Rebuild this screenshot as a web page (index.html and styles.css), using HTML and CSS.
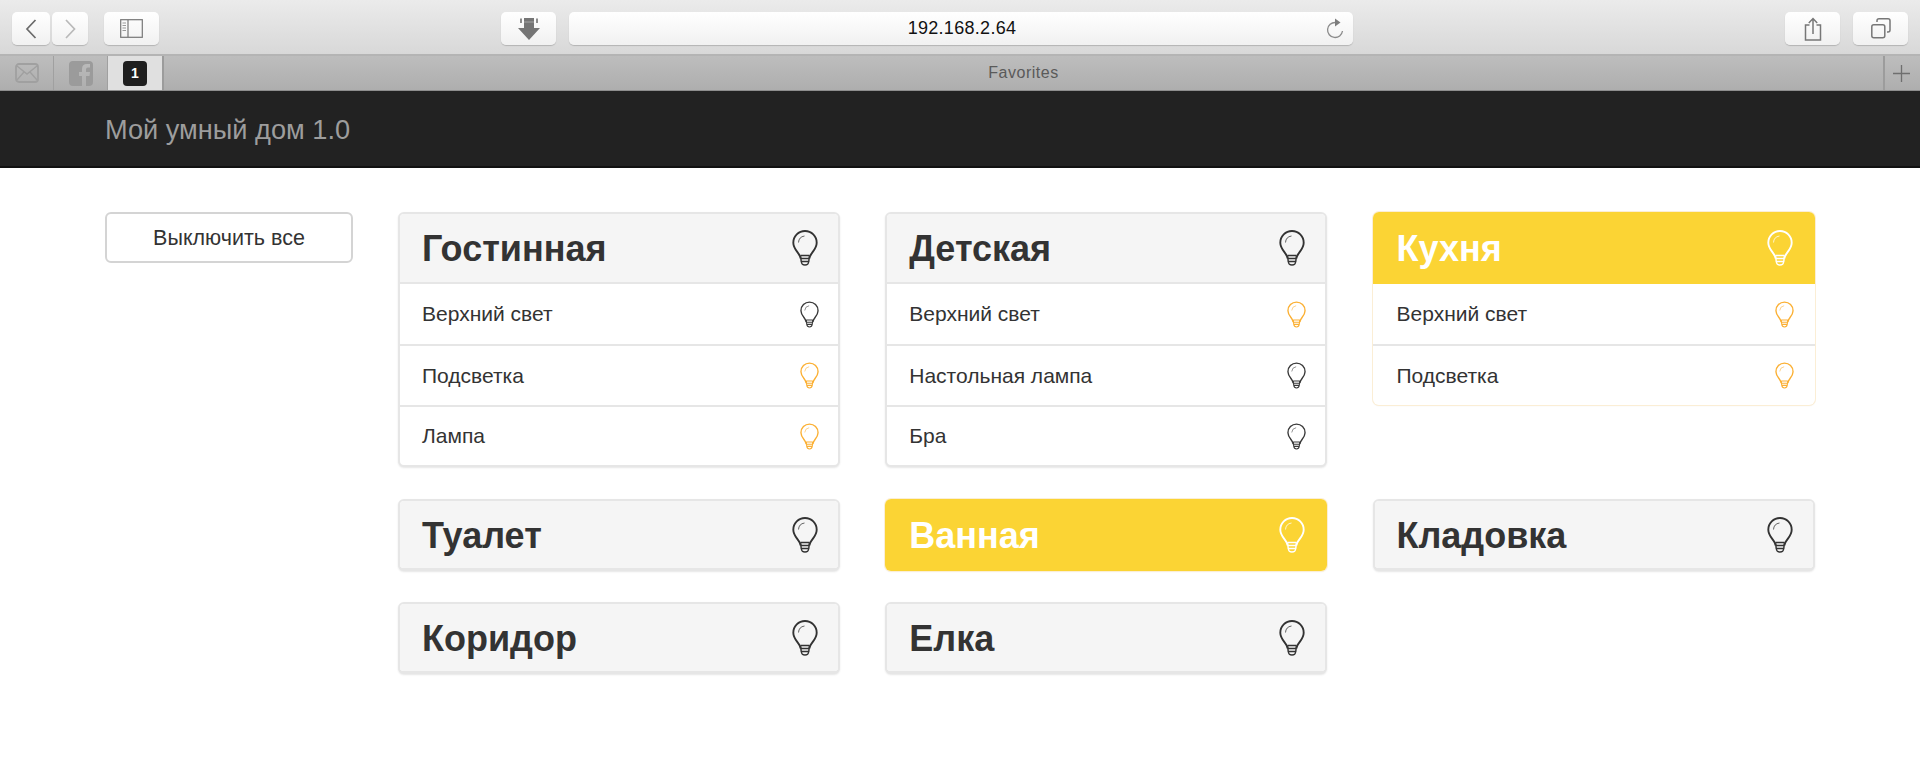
FILE: index.html
```html
<!DOCTYPE html>
<html lang="ru">
<head>
<meta charset="utf-8">
<title>Мой умный дом 1.0</title>
<link rel="stylesheet" href="styles.css">
</head>
<body>
<svg class="defs" width="0" height="0" aria-hidden="true">
  <symbol id="bulb" viewBox="0 0 26 36">
    <path d="M8.5 28.5C8.5 23.5 1.3 20 1.3 12.7A11.7 11.7 0 0 1 24.7 12.7C24.7 20 17.5 23.5 17.5 28.5" fill="none" stroke="currentColor" stroke-width="1.9"/>
    <path d="M8.5 25.5H17.5M8.7 28.5H17.3M9 31.5H17M9.3 31.5C9.6 34.4 10.5 35 13 35S16.4 34.4 16.7 31.5M8.5 25.5L9.3 32M17.5 25.5L16.7 32" fill="none" stroke="currentColor" stroke-width="1.5"/>
    <path d="M6.5 12.5A7 7 0 0 1 12.5 6" fill="none" stroke="currentColor" stroke-width="1" opacity=".75"/>
  </symbol>
</svg>

<div class="toolbar">
  <button class="tb back"><svg width="14" height="22" viewBox="0 0 14 22"><path d="M11.5 2L3 11L11.5 20" fill="none" stroke="#6a6a6a" stroke-width="1.7"/></svg></button>
  <button class="tb forward"><svg width="14" height="22" viewBox="0 0 14 22"><path d="M3 2L11.5 11L3 20" fill="none" stroke="#b9b9b9" stroke-width="1.7"/></svg></button>
  <button class="tb sidebar"><svg width="23" height="19" viewBox="0 0 23 19"><rect x=".7" y=".7" width="21.6" height="17.6" fill="none" stroke="#777" stroke-width="1.2"/><path d="M8 1V18" stroke="#777" stroke-width="1.2"/><path d="M2.5 4H6M2.5 6.5H6M2.5 9H6M2.5 11.5H6" stroke="#999" stroke-width="1"/></svg></button>
  <button class="tb download"><svg width="24" height="24" viewBox="0 0 24 24"><path d="M7 1H17V11H23L12 23L1 11H7Z" fill="#757575"/><path d="M4 1.5V6M20 1.5V6" stroke="#8c8c8c" stroke-width="2"/><path d="M7 5H17" stroke="#a5a5a5" stroke-width="1"/></svg></button>
  <div class="url">
    <span class="url-text">192.168.2.64</span>
    <svg class="reload" width="18" height="24" viewBox="0 0 18 24"><path d="M9.5 5.5A7.5 7.5 0 1 0 16.5 14" fill="none" stroke="#8a8a8a" stroke-width="1.3"/><path d="M9 1.5L14.5 5.5L9 9.5Z" fill="#7d7d7d"/></svg>
  </div>
  <button class="tb share"><svg width="18" height="24" viewBox="0 0 18 24"><path d="M5.5 8H1.5V23H16.5V8H12.5" fill="none" stroke="#777" stroke-width="1.5"/><path d="M9 17V2M4.8 6L9 1.5L13.2 6" fill="none" stroke="#777" stroke-width="1.5"/></svg></button>
  <button class="tb tabs"><svg width="20" height="21" viewBox="0 0 20 21"><rect x=".8" y="6.8" width="13" height="13" rx="2" fill="none" stroke="#777" stroke-width="1.5"/><path d="M6 4V2.8Q6 .8 8 .8H17Q19 .8 19 2.8V12Q19 14 17 14H16" fill="none" stroke="#777" stroke-width="1.5"/></svg></button>
</div>

<div class="tabbar">
  <div class="fav"><svg width="24" height="20" viewBox="0 0 24 20"><rect x="1" y="1" width="22" height="18" rx="3" fill="none" stroke="#a0a0a0" stroke-width="1.8"/><path d="M2 3L12 11L22 3M2 17L9 9M22 17L15 9" fill="none" stroke="#a0a0a0" stroke-width="1.4"/></svg></div>
  <div class="fav"><svg width="24" height="25" viewBox="0 0 24 25"><path d="M4 0H20Q24 0 24 4V21Q24 25 20 25H17V15H20.5L21 11H17V8.5Q17 6.5 19 6.5H21V3H18Q13 3 13 8V11H10V15H13V25H4Q0 25 0 21V4Q0 0 4 0Z" fill="#9b9b9b"/></svg></div>
  <div class="fav active"><span class="badge">1</span></div>
  <div class="fav-title">Favorites</div>
  <div class="add"><svg width="17" height="17" viewBox="0 0 17 17"><path d="M8.5 0V17M0 8.5H17" stroke="#6f6f6f" stroke-width="1.3"/></svg></div>
</div>

<header class="navbar"><span class="brand">Мой умный дом 1.0</span></header>

<main class="content">
  <aside class="side"><button class="off-all">Выключить все</button></aside>
  <div class="rooms">
    <section class="card">
      <div class="head"><h2>Гостинная</h2><svg class="bulb big"><use href="#bulb"/></svg></div>
      <div class="row"><span>Верхний свет</span><svg class="bulb small"><use href="#bulb"/></svg></div>
      <div class="row"><span>Подсветка</span><svg class="bulb small on"><use href="#bulb"/></svg></div>
      <div class="row"><span>Лампа</span><svg class="bulb small on"><use href="#bulb"/></svg></div>
    </section>
    <section class="card">
      <div class="head"><h2>Детская</h2><svg class="bulb big"><use href="#bulb"/></svg></div>
      <div class="row"><span>Верхний свет</span><svg class="bulb small on"><use href="#bulb"/></svg></div>
      <div class="row"><span>Настольная лампа</span><svg class="bulb small"><use href="#bulb"/></svg></div>
      <div class="row"><span>Бра</span><svg class="bulb small"><use href="#bulb"/></svg></div>
    </section>
    <section class="card lit">
      <div class="head"><h2>Кухня</h2><svg class="bulb big"><use href="#bulb"/></svg></div>
      <div class="row"><span>Верхний свет</span><svg class="bulb small on"><use href="#bulb"/></svg></div>
      <div class="row"><span>Подсветка</span><svg class="bulb small on"><use href="#bulb"/></svg></div>
    </section>
    <section class="card solo">
      <div class="head"><h2>Туалет</h2><svg class="bulb big"><use href="#bulb"/></svg></div>
    </section>
    <section class="card solo lit">
      <div class="head"><h2>Ванная</h2><svg class="bulb big"><use href="#bulb"/></svg></div>
    </section>
    <section class="card solo">
      <div class="head"><h2>Кладовка</h2><svg class="bulb big"><use href="#bulb"/></svg></div>
    </section>
    <section class="card solo">
      <div class="head"><h2>Коридор</h2><svg class="bulb big"><use href="#bulb"/></svg></div>
    </section>
    <section class="card solo">
      <div class="head"><h2>Елка</h2><svg class="bulb big"><use href="#bulb"/></svg></div>
    </section>
  </div>
</main>
</body>
</html>
```

FILE: styles.css
```css
* { box-sizing: border-box; }
html, body { margin: 0; padding: 0; }
body {
  height: 784px;
  overflow: hidden;
  background: #fff;
  font-family: "Liberation Sans", Arial, sans-serif;
  color: #333;
}
.defs { position: absolute; }

.toolbar {
  height: 56px;
  display: flex;
  align-items: flex-start;
  padding: 12px 0 0 12px;
  background: linear-gradient(#ebebeb, #d8d8d8);
  border-bottom: 2px solid #b4b4b4;
}
.tb, .url {
  height: 33px;
  border: 0;
  padding: 0;
  border-radius: 5px;
  background: linear-gradient(#ffffff, #f1f1f1);
  box-shadow: 0 1px 1px rgba(0, 0, 0, .18);
  display: flex;
  align-items: center;
  justify-content: center;
}
.back { width: 38px; }
.forward { width: 36px; margin-left: 2px; }
.sidebar { width: 55px; margin-left: 16px; }
.download { width: 55px; margin-left: 342px; }
.url {
  width: 784px;
  margin-left: 13px;
  position: relative;
}
.url-text {
  font-size: 18px;
  letter-spacing: .3px;
  color: #111;
  padding-left: 2px;
}
.reload { position: absolute; right: 9px; top: 5px; }
.share { width: 55px; margin-left: 432px; }
.tabs { width: 55px; margin-left: 13px; }

.tabbar {
  height: 35px;
  display: flex;
  background: linear-gradient(#bdbdbd, #aeaeae);
  border-bottom: 1px solid #8e8e8e;
}
.fav {
  width: 54px;
  display: flex;
  align-items: center;
  justify-content: center;
  border-right: 1px solid #a0a0a0;
}
.fav.active { width: 56px; background: #e0e0e0; border-right: 2px solid #9c9c9c; }
.badge {
  width: 24px;
  height: 25px;
  border-radius: 4px;
  background: #1f1f1f;
  color: #fff;
  font-size: 14px;
  font-weight: bold;
  display: flex;
  align-items: center;
  justify-content: center;
}
.fav-title {
  flex: 1;
  text-align: center;
  font-size: 16px;
  letter-spacing: .5px;
  line-height: 34px;
  color: #5a5a5a;
}
.add {
  width: 37px;
  display: flex;
  align-items: center;
  justify-content: center;
  padding-right: 2px;
  border-left: 2px solid #9c9c9c;
}

.navbar {
  height: 77px;
  padding: 2px 0 0 105px;
  background: #222;
  border-bottom: 2px solid #111;
  display: flex;
  align-items: center;
}
.brand { font-size: 27.2px; color: #9d9d9d; }

.content {
  display: flex;
  align-items: flex-start;
  padding: 44px 0 0 105px;
}
.side { width: 248px; flex: none; }
.off-all {
  width: 248px;
  height: 51px;
  border: 2px solid #d4d4d4;
  border-radius: 6px;
  padding: 2px 0 0;
  background: #fff;
  font-family: inherit;
  font-size: 21.5px;
  color: #333;
}
.rooms {
  margin-left: 45px;
  display: grid;
  grid-template-columns: repeat(3, 442px);
  column-gap: 45.25px;
  row-gap: 31.5px;
  align-items: start;
}
.card {
  border: 2px solid #e6e6e6;
  border-radius: 6px;
  background: #fff;
  box-shadow: 0 1px 2px rgba(0, 0, 0, .1);
  overflow: hidden;
}
.card.lit {
  border: 0;
  box-shadow: 0 0 0 1px #fbeed5, 0 1px 2px rgba(0, 0, 0, .06);
}
.head {
  height: 70px;
  padding: 0 20px 0 22px;
  display: flex;
  align-items: center;
  justify-content: space-between;
  background: #f5f5f5;
  color: #333;
  border-bottom: 2px solid #e6e6e6;
}
.head h2 {
  margin: 0;
  padding-top: 2px;
  font-size: 36px;
  font-weight: bold;
}
.lit .head {
  height: 72px;
  padding: 0 22px 0 24px;
  background: #fbd434;
  color: #fff;
  border-bottom: 0;
}
.row {
  height: 61px;
  padding: 0 19px 0 22px;
  display: flex;
  align-items: center;
  justify-content: space-between;
  font-size: 21px;
  border-top: 2px solid #e6e6e6;
}
.lit .row { padding: 0 21px 0 24px; }
.head + .row { border-top: 0; height: 60px; }
.row:last-child { height: 60px; }
.lit .row:last-child { height: 61px; }
.solo .head { height: 68px; border-bottom: 0; }
.solo { height: 72px; border-bottom-width: 3px; }
.solo.lit .head { height: 72px; }
.bulb { display: block; flex: none; }
.bulb.big { width: 26px; height: 36px; }
.bulb.small { width: 19px; height: 27px; color: #3a3a3a; }
.bulb.small.on { color: #fbb034; }
```
